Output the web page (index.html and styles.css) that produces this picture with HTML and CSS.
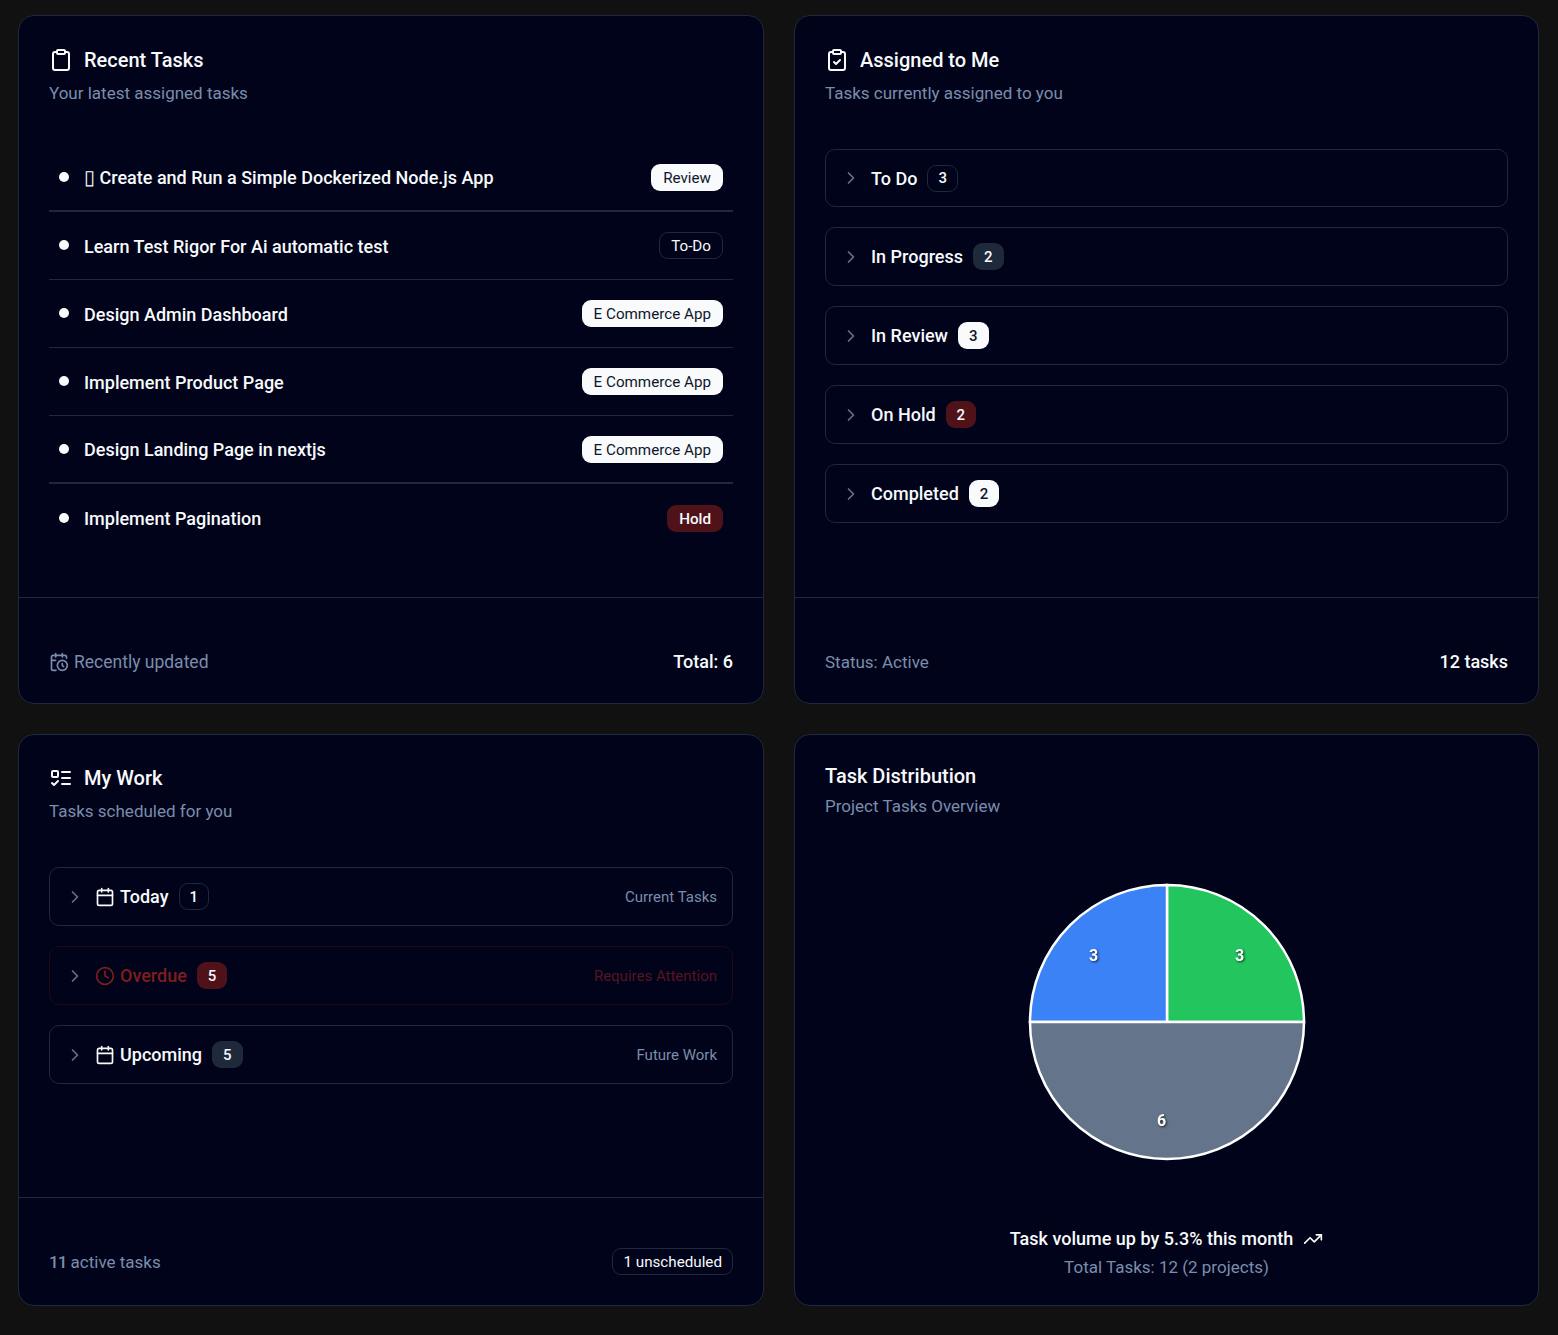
FILE: index.html
```html
<!DOCTYPE html>
<html lang="en">
<head>
  <meta charset="UTF-8" />
  <meta name="viewport" content="width=device-width, initial-scale=1.0" />
  <title>Dashboard | Tasks</title>
  <link rel="stylesheet" href="styles.css">
</head>
<body>
  <svg class="sprite" width="0" height="0" aria-hidden="true">
    <symbol id="i-clipboard" viewBox="0 0 24 24"><rect x="8" y="2" width="8" height="4" rx="1" ry="1"/><path d="M16 4h2a2 2 0 0 1 2 2v14a2 2 0 0 1-2 2H6a2 2 0 0 1-2-2V6a2 2 0 0 1 2-2h2"/></symbol>
    <symbol id="i-clipboard-check" viewBox="0 0 24 24"><rect x="8" y="2" width="8" height="4" rx="1" ry="1"/><path d="M16 4h2a2 2 0 0 1 2 2v14a2 2 0 0 1-2 2H6a2 2 0 0 1-2-2V6a2 2 0 0 1 2-2h2"/><path d="m9 14 2 2 4-4"/></symbol>
    <symbol id="i-calendar-clock" viewBox="0 0 24 24"><path d="M21 7.5V6a2 2 0 0 0-2-2H5a2 2 0 0 0-2 2v14a2 2 0 0 0 2 2h3.5"/><path d="M16 2v4"/><path d="M8 2v4"/><path d="M3 10h5"/><path d="M17.5 17.5 16 16.3V14"/><circle cx="16" cy="16" r="6"/></symbol>
    <symbol id="i-list-todo" viewBox="0 0 24 24"><rect x="3" y="5" width="6" height="6" rx="1"/><path d="m3 17 2 2 4-4"/><path d="M13 6h8"/><path d="M13 12h8"/><path d="M13 18h8"/></symbol>
    <symbol id="i-chevron" viewBox="0 0 24 24"><path d="m9 18 6-6-6-6"/></symbol>
    <symbol id="i-calendar" viewBox="0 0 24 24"><path d="M8 2v4"/><path d="M16 2v4"/><rect x="3" y="4" width="18" height="18" rx="2"/><path d="M3 10h18"/></symbol>
    <symbol id="i-clock" viewBox="0 0 24 24"><circle cx="12" cy="12" r="10"/><polyline points="12 6 12 12 16 14"/></symbol>
    <symbol id="i-trending" viewBox="0 0 24 24"><path d="M16 7h6v6"/><path d="m22 7-8.5 8.5-5-5L2 17"/></symbol>
  </svg>

  <main class="dashboard">
    <section class="card">
      <header class="card-head">
        <h2><svg class="icon icon-lg"><use href="#i-clipboard"/></svg>Recent Tasks</h2>
        <p class="sub">Your latest assigned tasks</p>
      </header>
      <ul class="task-list">
        <li class="task task-thick"><span class="dot"></span><span class="task-name"><span class="tofu">▯</span> Create and Run a Simple Dockerized Node.js App</span><span class="tag tag-light">Review</span></li>
        <li class="task"><span class="dot"></span><span class="task-name">Learn Test Rigor For Ai automatic test</span><span class="tag tag-outline">To-Do</span></li>
        <li class="task"><span class="dot"></span><span class="task-name">Design Admin Dashboard</span><span class="tag tag-light">E Commerce App</span></li>
        <li class="task"><span class="dot"></span><span class="task-name">Implement Product Page</span><span class="tag tag-light">E Commerce App</span></li>
        <li class="task task-thick"><span class="dot"></span><span class="task-name">Design Landing Page in nextjs</span><span class="tag tag-light">E Commerce App</span></li>
        <li class="task"><span class="dot"></span><span class="task-name">Implement Pagination</span><span class="tag tag-red">Hold</span></li>
      </ul>
      <footer class="card-foot">
        <span class="muted with-icon"><svg class="icon icon-sm"><use href="#i-calendar-clock"/></svg>Recently updated</span>
        <strong>Total: 6</strong>
      </footer>
    </section>

    <section class="card">
      <header class="card-head">
        <h2><svg class="icon icon-lg"><use href="#i-clipboard-check"/></svg>Assigned to Me</h2>
        <p class="sub">Tasks currently assigned to you</p>
      </header>
      <div class="groups groups-status">
        <div class="group"><svg class="icon chev"><use href="#i-chevron"/></svg><span class="group-name">To Do</span><span class="count count-outline">3</span></div>
        <div class="group"><svg class="icon chev"><use href="#i-chevron"/></svg><span class="group-name">In Progress</span><span class="count count-slate">2</span></div>
        <div class="group"><svg class="icon chev"><use href="#i-chevron"/></svg><span class="group-name">In Review</span><span class="count count-light">3</span></div>
        <div class="group"><svg class="icon chev"><use href="#i-chevron"/></svg><span class="group-name">On Hold</span><span class="count count-red">2</span></div>
        <div class="group"><svg class="icon chev"><use href="#i-chevron"/></svg><span class="group-name">Completed</span><span class="count count-light">2</span></div>
      </div>
      <footer class="card-foot">
        <span class="muted">Status: Active</span>
        <strong>12 tasks</strong>
      </footer>
    </section>

    <section class="card">
      <header class="card-head head-work">
        <h2><svg class="icon icon-lg"><use href="#i-list-todo"/></svg>My Work</h2>
        <p class="sub">Tasks scheduled for you</p>
      </header>
      <div class="groups">
        <div class="group"><svg class="icon chev"><use href="#i-chevron"/></svg><svg class="icon icon-md"><use href="#i-calendar"/></svg><span class="group-name">Today</span><span class="count count-outline">1</span><span class="group-note">Current Tasks</span></div>
        <div class="group group-danger"><svg class="icon chev"><use href="#i-chevron"/></svg><svg class="icon icon-md"><use href="#i-clock"/></svg><span class="group-name">Overdue</span><span class="count count-red">5</span><span class="group-note">Requires Attention</span></div>
        <div class="group"><svg class="icon chev"><use href="#i-chevron"/></svg><svg class="icon icon-md"><use href="#i-calendar"/></svg><span class="group-name">Upcoming</span><span class="count count-slate">5</span><span class="group-note">Future Work</span></div>
      </div>
      <footer class="card-foot foot-tall">
        <span class="muted"><b>11</b> active tasks</span>
        <span class="tag tag-outline">1 unscheduled</span>
      </footer>
    </section>

    <section class="card">
      <header class="card-head head-plain">
        <h2>Task Distribution</h2>
        <p class="sub">Project Tasks Overview</p>
      </header>
      <div class="chart">
        <svg class="pie" width="280" height="280" viewBox="0 0 280 280">
          <path d="M140 140V3A137 137 0 0 1 277 140Z" fill="#22c55e"/>
          <path d="M140 140H3A137 137 0 0 1 140 3Z" fill="#3b82f6"/>
          <path d="M140 140H277A137 137 0 0 1 3 140Z" fill="#64748b"/>
          <text x="62" y="79">3</text>
          <text x="208" y="79">3</text>
          <text x="130" y="244">6</text>
        </svg>
      </div>
      <footer class="chart-foot">
        <p class="trend">Task volume up by 5.3% this month<svg class="icon icon-trend"><use href="#i-trending"/></svg></p>
        <p class="muted">Total Tasks: 12 (2 projects)</p>
      </footer>
    </section>
  </main>
</body>
</html>
```

FILE: styles.css
```css
:root {
  --page: #111111;
  --card: #00031a;
  --line: #1e293b;
  --text: #f8fafc;
  --muted: #7b8dab;
  --slate: #1e293b;
  --red: #7f1d1d;
  --dark-red: #501219;
}

* {
  box-sizing: border-box;
  margin: 0;
  padding: 0;
}

body {
  background: var(--page);
  color: var(--text);
  font-family: Roboto, sans-serif;
  font-size: 18px;
}

.sprite {
  position: absolute;
}

.icon {
  fill: none;
  stroke: currentColor;
  stroke-width: 2;
  stroke-linecap: round;
  stroke-linejoin: round;
  flex: none;
}

.icon-lg {
  width: 24px;
  height: 24px;
}

.icon-md {
  width: 20px;
  height: 20px;
}

.icon-sm {
  width: 20px;
  height: 20px;
}

.dashboard {
  display: grid;
  grid-template-columns: 746px 745px;
  grid-template-rows: 689px 572px;
  gap: 30px;
  padding: 15px 19px 29px 18px;
}

.card {
  background: var(--card);
  border: 1px solid var(--line);
  border-radius: 16px;
  display: flex;
  flex-direction: column;
  min-width: 0;
}

.card-head {
  padding: 29px 30px 0;
}

.card-head h2 {
  display: flex;
  align-items: center;
  gap: 11px;
  font-size: 20px;
  font-weight: 500;
  line-height: 30px;
}

.sub {
  color: var(--muted);
  font-size: 17px;
  line-height: 27px;
  margin-top: 5px;
}

.muted {
  color: var(--muted);
  font-size: 17px;
}

.muted b {
  font-weight: 500;
  letter-spacing: -1px;
}

.with-icon {
  display: flex;
  align-items: center;
  gap: 5px;
  font-size: 17.5px;
}

.task-list {
  list-style: none;
  padding: 0 30px;
  margin-top: 37px;
  flex: 1;
}

.task {
  display: flex;
  align-items: center;
  height: 68px;
  padding: 0 10px;
  border-bottom: 1px solid var(--line);
}

.task:last-child {
  border-bottom: none;
}

.task-thick {
  border-bottom-width: 2px;
}

.dot {
  width: 10px;
  height: 10px;
  border-radius: 50%;
  background: var(--text);
  margin-right: 15px;
  margin-top: -1px;
}

.task-name {
  flex: 1;
  font-size: 18px;
  font-weight: 500;
  margin-top: 1px;
}

.tofu {
  font-family: "DejaVu Sans", sans-serif;
  font-size: 20px;
  font-weight: 300;
  line-height: 1;
}

.tag {
  display: inline-flex;
  align-items: center;
  height: 27px;
  padding: 1px 11px 0;
  border-radius: 9px;
  border: 1px solid transparent;
  font-size: 15.2px;
  font-weight: 400;
}

.tag-light {
  background: var(--text);
  color: #0f172a;
}

.tag-outline {
  border-color: var(--line);
}

.tag-red {
  background: var(--dark-red);
  font-weight: 500;
}

.foot-tall .tag {
  padding: 0 10px;
}

.groups {
  display: flex;
  flex-direction: column;
  gap: 20px;
  padding: 0 30px;
  margin-top: 42px;
  flex: 1;
}

.group {
  display: flex;
  align-items: center;
  height: 59px;
  padding: 0 15px;
  border: 1px solid var(--line);
  border-radius: 10px;
}

.groups-status .group:first-child {
  height: 58px;
}

.chev {
  width: 20px;
  height: 20px;
  color: #64748b;
  margin-right: 10px;
}

.group .icon-md {
  margin-right: 5px;
}

.group-name {
  font-size: 18px;
  font-weight: 500;
  margin-right: 10px;
}

.count {
  display: inline-flex;
  align-items: center;
  justify-content: center;
  height: 27px;
  min-width: 30px;
  padding: 0 10px;
  border-radius: 9px;
  border: 1px solid transparent;
  font-size: 15px;
  font-weight: 500;
}

.count-outline {
  border-color: var(--line);
}

.count-slate {
  background: var(--slate);
}

.count-light {
  background: var(--text);
  color: #0f172a;
}

.count-red {
  background: var(--dark-red);
}

.group-note {
  margin-left: auto;
  color: var(--muted);
  font-size: 15px;
}

.group-danger {
  border-color: #220714;
  color: var(--red);
}

.group-danger .chev {
  color: #64748b;
}

.group-danger .count {
  color: var(--text);
}

.group-danger .group-note {
  color: #571420;
}

.card-foot {
  display: flex;
  align-items: center;
  justify-content: space-between;
  height: 106px;
  padding: 22px 30px 0;
  border-top: 1px solid var(--line);
}

.foot-tall {
  height: 108px;
  padding-top: 20px;
}

.card-foot strong {
  font-size: 18px;
  font-weight: 500;
}

.head-work {
  padding-top: 28px;
}

.head-plain {
  padding-top: 28px;
}

.head-plain h2 {
  line-height: 26px;
}

.head-plain .sub {
  margin-top: 4px;
}

.chart {
  flex: 1;
  display: flex;
  justify-content: center;
  padding-top: 62px;
}

.pie path {
  stroke: #fff;
  stroke-width: 2.5;
}

.pie text {
  fill: #fff;
  font-size: 16px;
  font-weight: 700;
  filter: drop-shadow(1px 1px 1px rgba(0, 0, 0, 0.7));
}

.chart-foot {
  text-align: center;
  padding-bottom: 28px;
}

.trend {
  display: flex;
  align-items: center;
  justify-content: center;
  gap: 10px;
  font-size: 18px;
  font-weight: 500;
  margin-bottom: 8px;
}

.icon-trend {
  width: 20px;
  height: 20px;
}
```
